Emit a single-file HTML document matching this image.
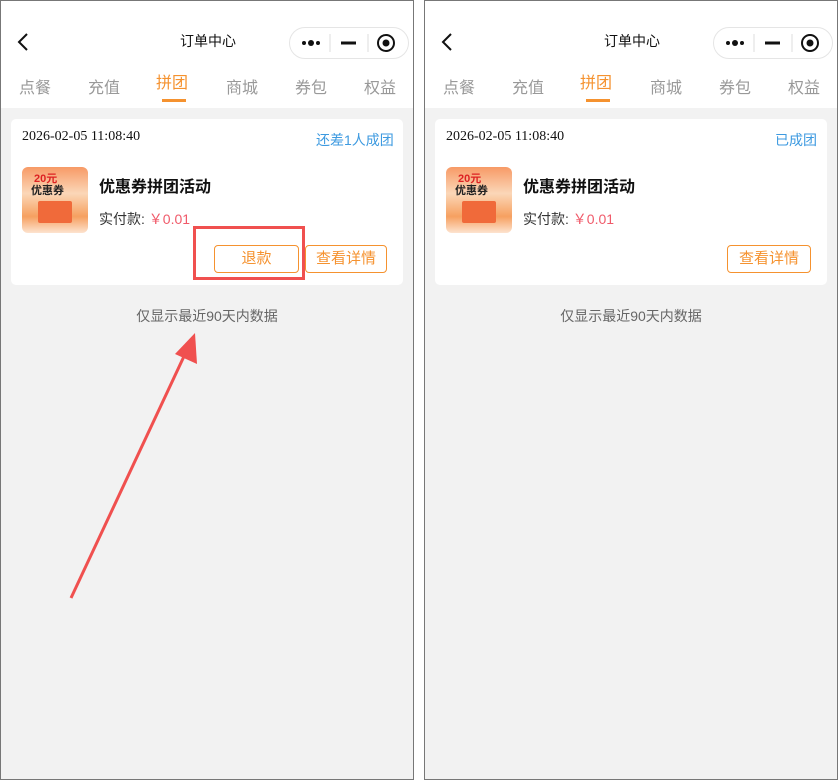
<!DOCTYPE html><html><head><meta charset="utf-8"><style>
*{margin:0;padding:0;box-sizing:border-box}
body{width:838px;height:780px;background:#fff;position:relative;overflow:hidden;font-family:"Liberation Sans","Noto Sans CJK SC",sans-serif}
.p{position:absolute;top:0;width:414px;height:780px;border:1px solid #777;background:#f2f2f2;overflow:hidden}
.hd{position:absolute;left:0;top:0;width:100%;height:107px;background:#fff}
.a{position:absolute;white-space:nowrap}
.tab{top:73px;font-size:16px;color:#999}
.card{position:absolute;left:10px;top:118px;width:392px;height:166px;background:#fff;border-radius:5px}
.btn{position:absolute;top:126px;height:28px;border:1px solid #f5922f;border-radius:4px;color:#f5922f;font-size:15px;text-align:center;line-height:26px}
</style></head><body>
<div class="p" style="left:0">
<div class="hd">
<svg class="a" style="left:14px;top:31px" width="14" height="20"><path d="M12 2 L4 10 L12 18" stroke="#111" stroke-width="2" fill="none"/></svg>
<div class="a" style="left:179px;top:30px;font-size:14px;color:#111">订单中心</div>
<div class="a" style="left:288px;top:26px;width:120px;height:32px;border:1px solid #e5e5e5;border-radius:16px"></div>
<svg class="a" style="left:288px;top:26px" width="120" height="32"><circle cx="15" cy="16" r="2" fill="#111"/><circle cx="22" cy="16" r="3" fill="#111"/><circle cx="29" cy="16" r="2" fill="#111"/><line x1="41" y1="7" x2="41" y2="25" stroke="#ddd"/><rect x="52" y="14.5" width="15" height="3" fill="#111"/><line x1="79" y1="7" x2="79" y2="25" stroke="#ddd"/><circle cx="97" cy="16" r="8" stroke="#111" stroke-width="2" fill="none"/><circle cx="97" cy="16" r="3.5" fill="#111"/></svg>
<div class="a tab" style="left:18px">点餐</div><div class="a tab" style="left:87px">充值</div>
<div class="a tab" style="left:155px;top:68px;color:#f5922f">拼团</div>
<div class="a" style="left:161px;top:98px;width:24px;height:3px;background:#f5922f"></div>
<div class="a tab" style="left:225px">商城</div><div class="a tab" style="left:294px">券包</div><div class="a tab" style="left:363px">权益</div>
</div>
<div class="card">
<div class="a" style="left:11px;top:10px;font-family:'Liberation Serif',serif;font-size:14px;color:#111">2026-02-05 11:08:40</div>
<div class="a" style="left:305px;top:11px;font-size:14px;color:#3d9ae0">还差1人成团</div>
<div class="a" style="left:11px;top:48px;width:66px;height:66px;border-radius:6px;background:linear-gradient(#f79a66,#fbd7b8 40%,#f6a060 75%,#fde3cf)"><div style="position:absolute;left:12px;top:3px;font-size:11px;font-weight:bold;color:#d22">20元</div><div style="position:absolute;left:9px;top:15px;font-size:11px;font-weight:bold;color:#222">优惠券</div><div style="position:absolute;left:16px;top:34px;width:34px;height:22px;background:#f06a3a;border-radius:2px"></div></div>
<div class="a" style="left:88px;top:54px;font-size:16px;font-weight:bold;color:#111">优惠券拼团活动</div>
<div class="a" style="left:88px;top:90px;font-size:14px;color:#333">实付款: <span style="color:#f05a6a">￥0.01</span></div>
<div class="btn" style="left:203px;width:85px">退款</div>
<div class="btn" style="left:294px;width:82px">查看详情</div>
</div>
<div class="a" style="left:0;width:412px;text-align:center;top:305px;font-size:14px;color:#666">仅显示最近90天内数据</div>
</div>
<div class="p" style="left:424px">
<div class="hd">
<svg class="a" style="left:14px;top:31px" width="14" height="20"><path d="M12 2 L4 10 L12 18" stroke="#111" stroke-width="2" fill="none"/></svg>
<div class="a" style="left:179px;top:30px;font-size:14px;color:#111">订单中心</div>
<div class="a" style="left:288px;top:26px;width:120px;height:32px;border:1px solid #e5e5e5;border-radius:16px"></div>
<svg class="a" style="left:288px;top:26px" width="120" height="32"><circle cx="15" cy="16" r="2" fill="#111"/><circle cx="22" cy="16" r="3" fill="#111"/><circle cx="29" cy="16" r="2" fill="#111"/><line x1="41" y1="7" x2="41" y2="25" stroke="#ddd"/><rect x="52" y="14.5" width="15" height="3" fill="#111"/><line x1="79" y1="7" x2="79" y2="25" stroke="#ddd"/><circle cx="97" cy="16" r="8" stroke="#111" stroke-width="2" fill="none"/><circle cx="97" cy="16" r="3.5" fill="#111"/></svg>
<div class="a tab" style="left:18px">点餐</div><div class="a tab" style="left:87px">充值</div>
<div class="a tab" style="left:155px;top:68px;color:#f5922f">拼团</div>
<div class="a" style="left:161px;top:98px;width:24px;height:3px;background:#f5922f"></div>
<div class="a tab" style="left:225px">商城</div><div class="a tab" style="left:294px">券包</div><div class="a tab" style="left:363px">权益</div>
</div>
<div class="card">
<div class="a" style="left:11px;top:10px;font-family:'Liberation Serif',serif;font-size:14px;color:#111">2026-02-05 11:08:40</div>
<div class="a" style="left:340px;top:11px;font-size:14px;color:#3d9ae0">已成团</div>
<div class="a" style="left:11px;top:48px;width:66px;height:66px;border-radius:6px;background:linear-gradient(#f79a66,#fbd7b8 40%,#f6a060 75%,#fde3cf)"><div style="position:absolute;left:12px;top:3px;font-size:11px;font-weight:bold;color:#d22">20元</div><div style="position:absolute;left:9px;top:15px;font-size:11px;font-weight:bold;color:#222">优惠券</div><div style="position:absolute;left:16px;top:34px;width:34px;height:22px;background:#f06a3a;border-radius:2px"></div></div>
<div class="a" style="left:88px;top:54px;font-size:16px;font-weight:bold;color:#111">优惠券拼团活动</div>
<div class="a" style="left:88px;top:90px;font-size:14px;color:#333">实付款: <span style="color:#f05a6a">￥0.01</span></div>
<div class="btn" style="left:292px;width:84px">查看详情</div>
</div>
<div class="a" style="left:0;width:412px;text-align:center;top:305px;font-size:14px;color:#666">仅显示最近90天内数据</div>
</div>
<div class="a" style="left:193px;top:226px;width:112px;height:54px;border:3px solid #f0504f"></div>
<svg class="a" style="left:0;top:0" width="420" height="780"><line x1="71" y1="598" x2="186" y2="352" stroke="#f0504f" stroke-width="3"/><path d="M195 333 L175 354 L197 364 Z" fill="#f0504f"/></svg>
</body></html>
